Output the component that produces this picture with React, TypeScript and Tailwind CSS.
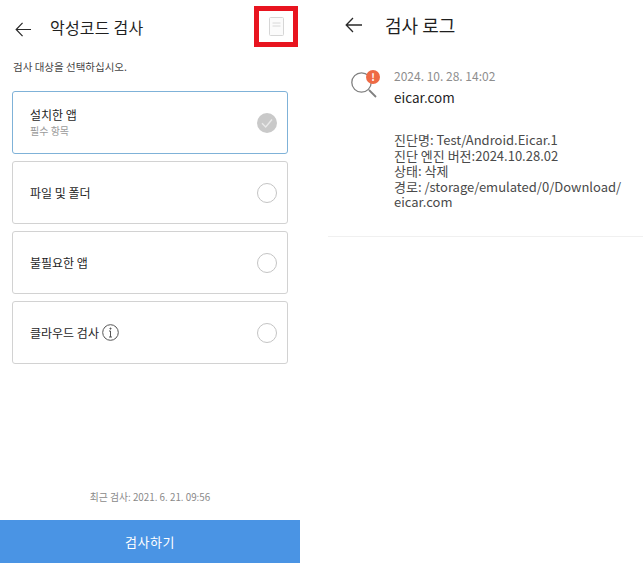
function Arrow({ className }: { className: string }) {
  return (
    <svg className={className} viewBox="0 0 18 16" fill="none" stroke="#2a2a2a" strokeWidth="1.3">
      <path d="M17 8H1.2M8 1 1.2 8 8 15" />
    </svg>
  );
}

function Radio({ checked }: { checked?: boolean }) {
  if (checked) {
    return (
      <svg className="w-[20px] h-[20px] shrink-0" viewBox="0 0 20 20" fill="none">
        <circle cx="10" cy="10" r="10" fill="#c9c9c9" />
        <path d="M5 10.2 8.7 14 15 6.5" stroke="#e9e9e9" strokeWidth="1.4" />
      </svg>
    );
  }
  return <div className="w-[20px] h-[20px] shrink-0 rounded-full border border-[#c4c4c4] bg-white" />;
}

function Card({
  selected,
  children,
}: {
  selected?: boolean;
  children: React.ReactNode;
}) {
  return (
    <div
      className={
        selected
          ? "h-[63px] rounded-[3px] border border-[#7fb2d8] flex items-center justify-between pl-[17px] pr-[10px]"
          : "h-[63px] rounded-[3px] border border-[#d2d2d2] flex items-center justify-between pl-[17px] pr-[10px]"
      }
    >
      {children}
      <Radio checked={selected} />
    </div>
  );
}

export default function App() {
  return (
    <div className="w-[643px] h-[563px] bg-white flex overflow-hidden font-['Noto_Sans_CJK_KR','Noto_Sans',sans-serif] text-[#1f1f1f]">
      <div className="w-[300px] h-full flex flex-col shrink-0">
        <div className="h-[47px] mt-[6px] flex items-center pl-[15px] pr-[2px]">
          <Arrow className="w-[17px] h-[15px]" />
          <div className="ml-[18px] text-[16px] leading-none tracking-[0.2px] mt-[-5px]">악성코드 검사</div>
          <div className="ml-auto w-[44px] h-[41px] border-[5px] border-[#e8141f] flex items-center justify-center mb-[6px]">
            <svg className="w-[15px] h-[19px]" viewBox="0 0 15 19" fill="none">
              <rect x="0.5" y="0.5" width="14" height="18" rx="1" fill="#fbfbfb" stroke="#d6d6d6" />
              <path d="M3.5 6h8M3.5 9h8" stroke="#d8d8d8" />
            </svg>
          </div>
        </div>
        <div className="ml-[13px] mt-[7px] text-[10.5px] leading-[14px] text-[#444]">검사 대상을 선택하십시오.</div>
        <div className="mx-[12px] mt-[17px] flex flex-col gap-[7px]">
          <Card selected>
            <div className="flex flex-col gap-[2px] pb-[2px]">
              <div className="text-[12px] leading-[15px]">설치한 앱</div>
              <div className="text-[10px] leading-[13px] text-[#9a9a9a]">필수 항목</div>
            </div>
          </Card>
          <Card>
            <div className="text-[12px]">파일 및 폴더</div>
          </Card>
          <Card>
            <div className="text-[12px]">불필요한 앱</div>
          </Card>
          <Card>
            <div className="flex items-center gap-[3px]">
              <div className="text-[12px]">클라우드 검사</div>
              <svg className="w-[17px] h-[17px]" viewBox="0 0 17 17" fill="none" stroke="#555">
                <circle cx="8.5" cy="8.5" r="7.8" />
                <path d="M8.5 7v6M7 7h1.5M7 13h3" />
                <circle cx="8.5" cy="4.6" r="0.6" fill="#555" />
              </svg>
            </div>
          </Card>
        </div>
        <div className="mt-auto mb-[16px] text-center text-[9.8px] leading-[14px] text-[#8a8a8a]">최근 검사: 2021. 6. 21. 09:56</div>
        <div className="h-[43px] bg-[#4a94e4] flex items-center justify-center text-white text-[13px] tracking-[0.6px]">검사하기</div>
      </div>

      <div className="ml-[28px] flex-1 flex flex-col">
        <div className="h-[50px] flex items-center pl-[17px]">
          <Arrow className="w-[18px] h-[16px]" />
          <div className="ml-[22px] text-[18px] leading-none">검사 로그</div>
        </div>
        <div className="flex pl-[23px] pt-[18px] h-[187px] border-b border-[#f0f0f0]">
          <div className="relative w-[27px] h-[27px] mt-[1px]">
            <svg className="absolute left-0 top-0 w-[27px] h-[30px]" viewBox="0 0 27 30" fill="none" stroke="#808080">
              <circle cx="10.5" cy="13.5" r="9.7" strokeWidth="1.3" />
              <path d="M18 21l7 7" strokeWidth="1.8" />
            </svg>
            <div className="absolute left-[15px] top-[1px] w-[14px] h-[14px] rounded-full bg-[#ee6a45] flex items-center justify-center text-white text-[10px] font-bold leading-none">!</div>
          </div>
          <div className="ml-[16px]">
            <div className="text-[12px] leading-[16px] text-[#8e8e8e]">2024. 10. 28. 14:02</div>
            <div className="mt-[4px] text-[13.5px] leading-[18px]">eicar.com</div>
            <div className="mt-[26px] text-[13px] leading-[15.6px] text-[#4a4a4a] w-[235px]">
              진단명: Test/Android.Eicar.1
              <br />
              진단 엔진 버전:2024.10.28.02
              <br />
              상태: 삭제
              <br />
              경로: /storage/emulated/0/Download/
              <br />
              eicar.com
            </div>
          </div>
        </div>
      </div>
    </div>
  );
}
